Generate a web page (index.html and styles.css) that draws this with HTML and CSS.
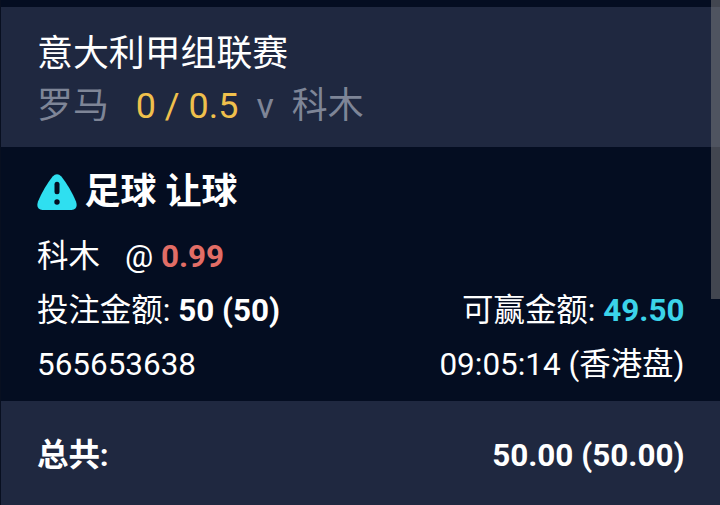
FILE: index.html
```
<!DOCTYPE html>
<html lang="zh-CN">
<head>
    <meta charset="UTF-8">
    <meta name="viewport" content="width=device-width, initial-scale=1.0">
    <title>注单</title>
    <link rel="stylesheet" href="styles.css">
</head>
<body>
    <div class="ticket">
        <header class="match">
            <div class="league">意大利甲组联赛</div>
            <div class="teams">
                <span class="home">罗马</span>
                <span class="handicap">0 / 0.5</span>
                <span class="versus">v</span>
                <span class="away">科木</span>
            </div>
        </header>

        <main class="bet">
            <h1 class="bet-type">
                <svg class="warning" viewBox="0 0 40 36" aria-hidden="true">
                    <path class="warning-shape" d="M15.6 2.6Q20-2.2 24.4 2.6Q33 13.5 39 27.5Q41.5 35.3 34.5 36H5.5Q-1.5 35.3 1 27.5Q7 13.5 15.6 2.6Z"/>
                    <path class="warning-mark" d="M20 10.3V17.7"/>
                    <circle class="warning-dot" cx="20" cy="28" r="2.7"/>
                </svg>
                足球 让球
            </h1>
            <div class="row">
                <div><span class="pick">科木</span>@ <b class="odds">0.99</b></div>
            </div>
            <div class="row">
                <div>投注金额: <b>50 (50)</b></div>
                <div>可赢金额: <b class="win">49.50</b></div>
            </div>
            <div class="row">
                <div>565653638</div>
                <div>09:05:14 (香港盘)</div>
            </div>
        </main>

        <footer class="total">
            <div>总共:</div>
            <div>50.00 (50.00)</div>
        </footer>
    </div>
    <div class="scrollbar"></div>
</body>
</html>
```

FILE: styles.css
```
* {
    box-sizing: border-box;
}

body {
    margin: 0;
    height: 505px;
    overflow: hidden;
    position: relative;
    background-color: #040d21;
    color: #ffffff;
    font-family: Roboto, "Noto Sans CJK SC", sans-serif;
    font-size: 31.45px;
    line-height: 54px;
}

.ticket {
    padding-top: 7px;
    border-left: 1px solid #080f20;
}

/* Liga y equipos */
.match {
    height: 140px;
    padding: 21px 36px 0;
    background-color: #1f2840;
    font-size: 35.9px;
    line-height: 52px;
}

.teams {
    display: flex;
    color: #7e8597;
}

.handicap {
    margin-left: 27px;
    color: #f0c04c;
}

.versus {
    margin-left: 18px;
}

.away {
    margin-left: 18px;
}

/* Detalle de la apuesta */
.bet {
    height: 254px;
    padding: 18px 35.5px 0 36px;
}

.bet-type {
    display: flex;
    align-items: center;
    margin: 0 0 11px;
    font-size: 36px;
    font-weight: 700;
    line-height: 54px;
}

.warning {
    width: 40px;
    height: 36px;
    margin: 0 7.5px 0 0;
}

.warning-shape {
    fill: #2fdff0;
}

.warning-mark {
    fill: none;
    stroke: #040d21;
    stroke-width: 5;
    stroke-linecap: round;
}

.warning-dot {
    fill: #040d21;
}

.row {
    display: flex;
    justify-content: space-between;
}

.pick {
    margin-right: 25px;
}

.odds {
    color: #e26d66;
}

.win {
    color: #3bd3e9;
}

/* Total */
.total {
    display: flex;
    justify-content: space-between;
    height: 104px;
    padding: 28px 35.5px 0 36px;
    background-color: #1f2840;
    font-weight: 700;
}

.scrollbar {
    position: absolute;
    top: 0;
    right: 0;
    width: 9px;
    height: 299px;
    background-color: rgba(128, 128, 128, 0.5);
}
```
